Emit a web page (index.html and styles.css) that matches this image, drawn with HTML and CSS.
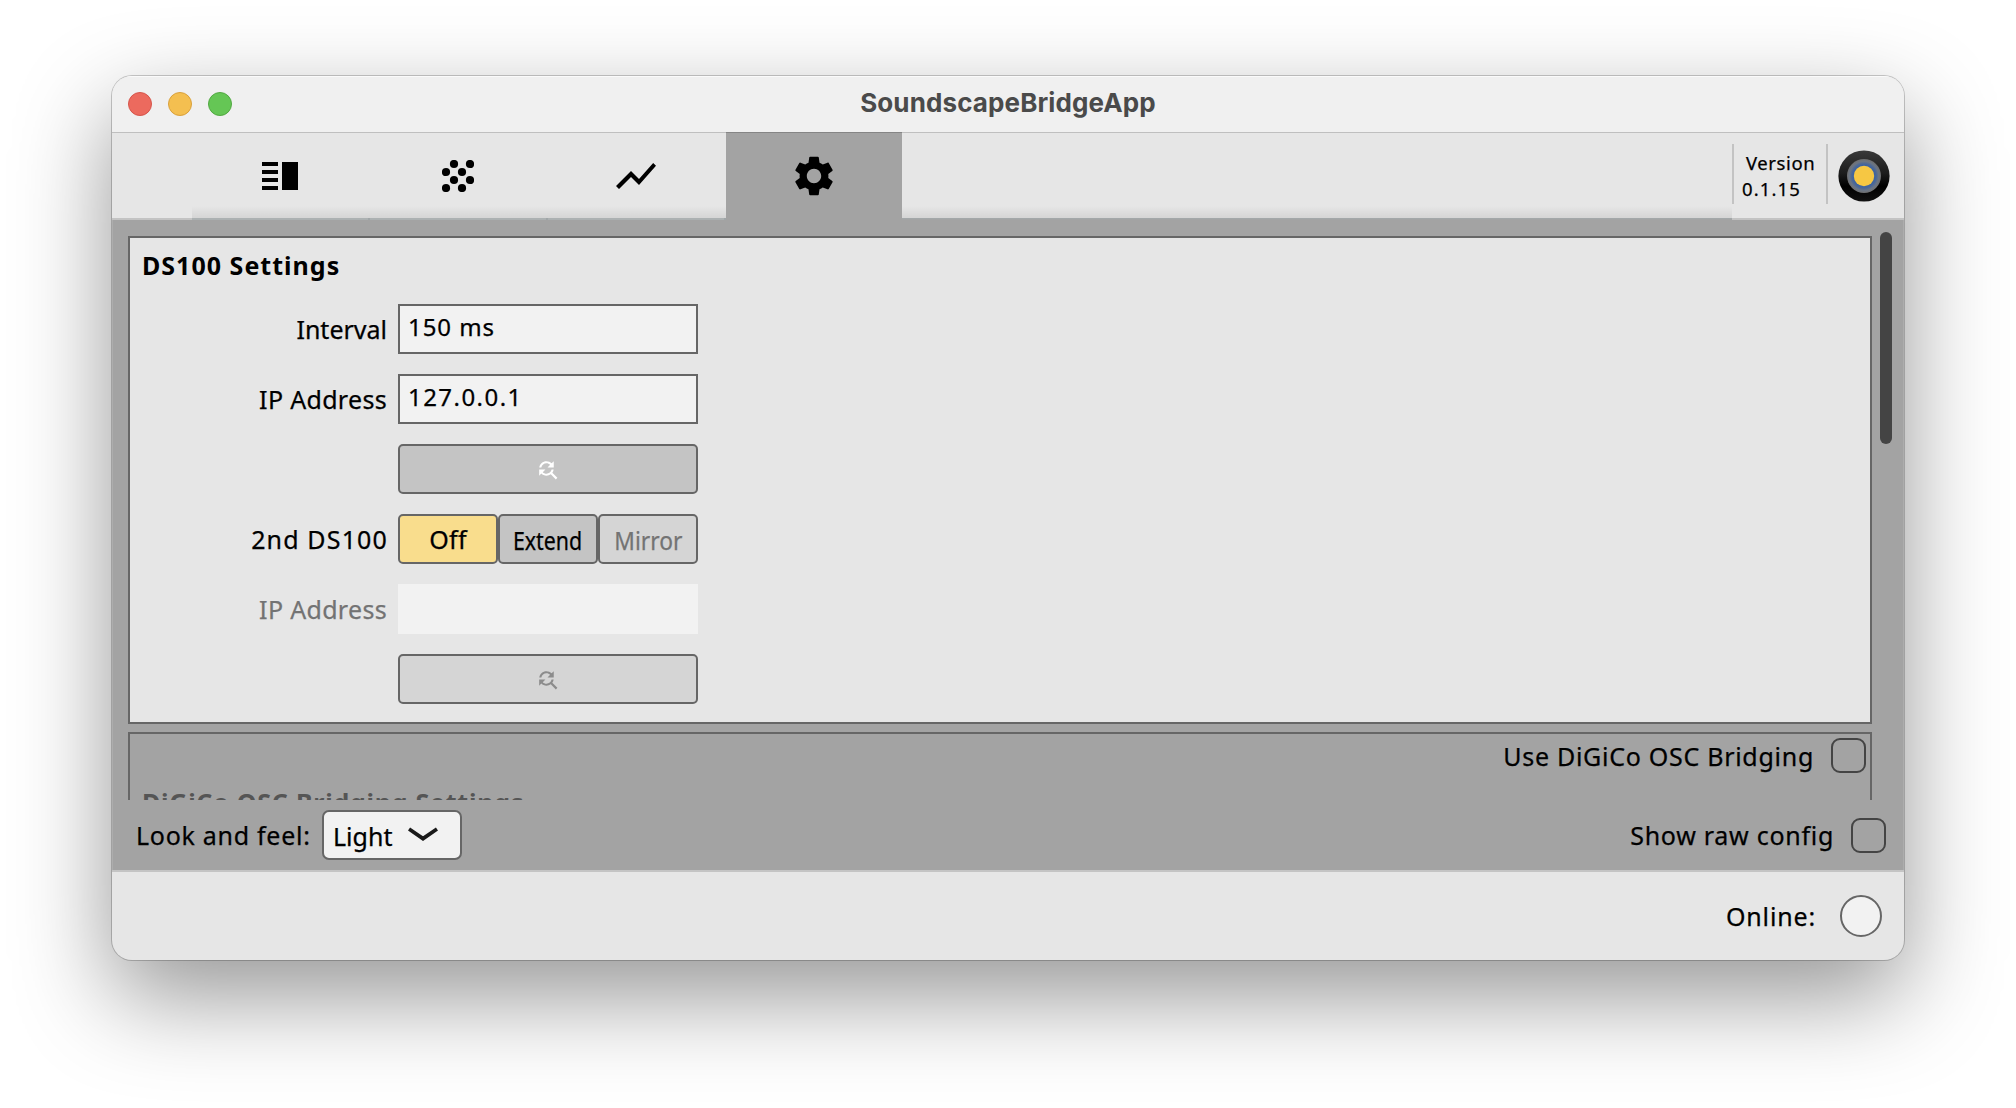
FILE: index.html
```html
<!DOCTYPE html>
<html lang="en">
<head>
<meta charset="utf-8">
<title>SoundscapeBridgeApp</title>
<link rel="stylesheet" href="styles.css">
</head>
<body>
<div class="window">
  <header class="titlebar">
    <div class="lights"><i class="light close"></i><i class="light minimise"></i><i class="light zoom"></i></div>
    <h1 class="title">SoundscapeBridgeApp</h1>
  </header>
  <nav class="toolbar">
    <div class="tabs">
      <div class="tab">
        <svg width="36" height="28" viewBox="0 0 36 28"><path d="M0 0h16v4H0zM0 8h16v4H0zM0 16h16v4H0zM0 24h16v4H0zM20 0h16v28H20z"/></svg>
      </div>
      <div class="tab">
        <svg width="32" height="32" viewBox="0 0 32 32"><circle cx="12" cy="4" r="4.1"/><circle cx="28" cy="4" r="4.1"/><circle cx="4" cy="12" r="4.1"/><circle cx="20" cy="12" r="4.1"/><circle cx="12" cy="20" r="4.1"/><circle cx="28" cy="20" r="4.1"/><circle cx="4" cy="28" r="4.1"/><circle cx="20" cy="28" r="4.1"/></svg>
      </div>
      <div class="tab">
        <svg width="48" height="48" viewBox="0 0 24 24"><path d="M3.5 18.49l6-6.01 4 4L22 6.92l-1.41-1.41-7.09 7.97-4-4L2 16.99z"/></svg>
      </div>
      <div class="tab selected">
        <svg width="48" height="48" viewBox="0 0 24 24"><path d="M19.14 12.94c.04-.3.06-.61.06-.94 0-.32-.02-.64-.07-.94l2.03-1.58c.18-.14.23-.41.12-.61l-1.92-3.32c-.12-.22-.37-.29-.59-.22l-2.39.96c-.5-.38-1.03-.7-1.62-.94l-.36-2.54c-.04-.24-.24-.41-.48-.41h-3.84c-.24 0-.43.17-.47.41l-.36 2.54c-.59.24-1.13.57-1.62.94l-2.39-.96c-.22-.08-.47 0-.59.22L2.74 8.87c-.12.21-.08.47.12.61l2.03 1.58c-.05.3-.09.63-.09.94s.02.64.07.94l-2.03 1.58c-.18.14-.23.41-.12.61l1.92 3.32c.12.22.37.29.59.22l2.39-.96c.5.38 1.03.7 1.62.94l.36 2.54c.05.24.24.41.48.41h3.84c.24 0 .44-.17.47-.41l.36-2.54c.59-.24 1.13-.56 1.62-.94l2.39.96c.22.08.47 0 .59-.22l1.92-3.32c.12-.22.07-.47-.12-.61l-2.01-1.58zM12 15.6c-1.98 0-3.6-1.62-3.6-3.6s1.62-3.6 3.6-3.6 3.6 1.62 3.6 3.6-1.62 3.6-3.6 3.6z"/></svg>
      </div>
    </div>
    <div class="about">
      <div class="version"><span class="version-name">Version</span><span class="version-number">0.1.15</span></div>
      <svg class="logo" width="52" height="52" viewBox="0 0 52 52">
        <defs>
          <linearGradient id="rim" x1="0" y1="0" x2="0" y2="1"><stop offset="0" stop-color="#3a3a3a"/><stop offset=".45" stop-color="#1c1c1c"/><stop offset=".7" stop-color="#000"/><stop offset="1" stop-color="#111"/></linearGradient>
          <radialGradient id="glow"><stop offset=".6" stop-color="#3a62a4"/><stop offset=".72" stop-color="#4a6797"/><stop offset=".86" stop-color="#6b7583"/><stop offset="1" stop-color="#6e6e6e"/></radialGradient>
        </defs>
        <circle cx="26" cy="26" r="25.6" fill="url(#rim)"/>
        <circle cx="26" cy="26" r="17" fill="url(#glow)"/>
        <circle cx="26" cy="26" r="10.2" fill="#f6c743"/>
      </svg>
    </div>
  </nav>
  <main class="content">
    <div class="viewport">
      <div class="sections">
        <section class="panel">
          <h2 class="heading">DS100 Settings</h2>
          <div class="form">
            <label class="label interval">Interval</label><div class="field">150 ms</div>
            <label class="label address">IP Address</label><div class="field ip">127.0.0.1</div>
            <span></span>
            <button class="button"><svg width="25" height="25" viewBox="0 0 24 24" fill="#fff"><path d="M11 6c1.38 0 2.63.56 3.54 1.46L12 10h6V4l-2.05 2.05C14.68 4.78 12.93 4 11 4c-3.53 0-6.43 2.61-6.92 6H6.1c.46-2.28 2.48-4 4.9-4zm5.64 9.14c.66-.9 1.12-1.97 1.28-3.14H15.9c-.46 2.28-2.48 4-4.9 4-1.38 0-2.63-.56-3.54-1.46L10 12H4v6l2.05-2.05C7.32 17.22 9.07 18 11 18c1.55 0 2.98-.51 4.14-1.36L20 21.49 21.49 20l-4.85-4.86z"/></svg></button>
            <label class="label second">2nd DS100</label>
            <div class="choices">
              <button class="button on"><span class="off">Off</span></button>
              <button class="button"><span class="extend">Extend</span></button>
              <button class="button disabled"><span class="mirror">Mirror</span></button>
            </div>
            <label class="label address muted">IP Address</label><div class="field empty"></div>
            <span></span>
            <button class="button disabled"><svg width="25" height="25" viewBox="0 0 24 24" fill="#8c8c8c"><path d="M11 6c1.38 0 2.63.56 3.54 1.46L12 10h6V4l-2.05 2.05C14.68 4.78 12.93 4 11 4c-3.53 0-6.43 2.61-6.92 6H6.1c.46-2.28 2.48-4 4.9-4zm5.64 9.14c.66-.9 1.12-1.97 1.28-3.14H15.9c-.46 2.28-2.48 4-4.9 4-1.38 0-2.63-.56-3.54-1.46L10 12H4v6l2.05-2.05C7.32 17.22 9.07 18 11 18c1.55 0 2.98-.51 4.14-1.36L20 21.49 21.49 20l-4.85-4.86z"/></svg></button>
          </div>
        </section>
        <section class="panel inactive">
          <label class="toggle"><span class="toggle-text">Use DiGiCo OSC Bridging</span><i class="checkbox"></i></label>
          <h2 class="heading">DiGiCo OSC Bridging Settings</h2>
        </section>
      </div>
      <div class="scrollbar"></div>
    </div>
    <div class="options">
      <span class="look">Look and feel:</span>
      <div class="select"><span class="select-text">Light</span><svg width="30" height="16" viewBox="0 0 30 16" fill="none" stroke="#1a1a1a" stroke-width="3.8"><path d="M1 2l14 9.6L29 2"/></svg></div>
      <label class="toggle raw"><span class="toggle-text">Show raw config</span><i class="checkbox"></i></label>
    </div>
  </main>
  <footer class="status"><span class="online">Online:</span><i class="lamp"></i></footer>
</div>
</body>
</html>
```
FILE: styles.css
```css
* { box-sizing: border-box; }
body {
  margin: 0;
  height: 1108px;
  padding: 76px 112px;
  overflow: hidden;
  background: #fff;
  color: #000;
  font: 25px/34px "Noto Sans", "Open Sans", sans-serif;
  -webkit-text-stroke: .25px;
}
svg { display: block; flex: none; }
.window {
  display: flex;
  flex-direction: column;
  width: 1792px;
  height: 884px;
  overflow: hidden;
  border-radius: 20px;
  background: #e6e6e6;
  box-shadow: 0 0 0 1px rgba(0,0,0,.2), 0 36px 96px rgba(0,0,0,.42);
}
.titlebar {
  display: grid;
  grid-template-columns: 1fr auto 1fr;
  align-items: center;
  height: 56px;
  flex: none;
  padding: 0 16px;
  background: #f0f0f0;
  box-shadow: inset 0 1px #fafafa;
}
.lights { display: flex; gap: 16px; }
.light { width: 24px; height: 24px; border-radius: 50%; border: 1px solid; }
.close { background: #ec6a5e; border-color: #d5554b; }
.minimise { background: #f4bf50; border-color: #d9a03c; }
.zoom { background: #65c655; border-color: #52a842; }
.title {
  margin: 0 0 2px;
  color: #4a4a4a;
  font: 700 26px/34px Inter, sans-serif;
  letter-spacing: .12px;
  -webkit-text-stroke: 0;
}
.toolbar {
  display: flex;
  height: 88px;
  flex: none;
  border-top: 1px solid #bfbfbf;
}
.tabs {
  display: flex;
  flex: 1;
  margin-left: 80px;
  background: linear-gradient(#a3a9ab, #a3a3a3) bottom / 100% 2px no-repeat,
    linear-gradient(rgba(0,0,0,0), rgba(0,0,0,.075)) 0 73px / 100% 12px no-repeat;
}
.toolbar { background: linear-gradient(#c3c3c3, #c3c3c3) bottom / 100% 2px no-repeat #e6e6e6; }
.tab {
  display: flex;
  align-items: center;
  justify-content: center;
  width: 178px;
  padding: 0 2px 1px 0;
  background: linear-gradient(90deg, #acb1b2 176px, #a0a6a8 176px) bottom / 100% 2px no-repeat;
}
.tab.selected { width: 176px; margin-top: -1px; padding-right: 0; border-top: 1px solid #858585; background: #a3a3a3; }
.about {
  display: flex;
  align-items: flex-start;
  width: 172px;
  padding-top: 11px;
}
.version {
  display: flex;
  flex-direction: column;
  width: 96px;
  height: 60px;
  padding: 6px 0 0 7px;
  border: solid #c3c3c3;
  border-width: 0 2px;
  font-size: 18.5px;
  line-height: 26px;
}
.version-name { margin-left: 5px; letter-spacing: .6px; }
.version-number { margin-left: 1px; letter-spacing: 1.1px; }
.logo { margin: 6px 0 0 10px; }
.content { height: 650px; flex: none; background: #a3a3a3; border: solid #adadad; border-width: 0 1px; }
.viewport { display: flex; height: 580px; overflow: hidden; }
.sections {
  display: flex;
  flex-direction: column;
  gap: 8px;
  width: 1759px;
  padding: 16px 0 0 15px;
}
.panel {
  width: 1744px;
  height: 488px;
  flex: none;
  padding: 10px 14px 10px 12px;
  border: 2px solid #666;
  background: #e6e6e6;
}
.heading { margin: 0; font-size: 25px; line-height: 34px; font-weight: 700; letter-spacing: 1.02px; -webkit-text-stroke: 0; }
.form {
  display: grid;
  grid-template-columns: 246px 300px;
  grid-auto-rows: 50px;
  row-gap: 20px;
  column-gap: 10px;
  margin-top: 22px;
}
.label { align-self: center; text-align: right; }
.interval { letter-spacing: 0; padding-right: 1px; }
.address { letter-spacing: .32px; padding-right: 1px; }
.second { letter-spacing: 1.15px; }
.muted { color: #737373; }
.field {
  padding: 3px 8px 0;
  border: 2px solid #666;
  background: #f2f2f2;
  font-size: 24px;
  line-height: 36px;
  letter-spacing: .95px;
}
.ip { letter-spacing: 1.45px; }
.empty { border-color: #f2f2f2; }
.button {
  display: flex;
  align-items: center;
  justify-content: center;
  width: 100%;
  height: 50px;
  padding: 0;
  border: 2px solid #666;
  border-radius: 5px;
  background: #c4c4c4;
  color: #000;
  font: inherit;
}
.button svg { margin-right: 1px; }
.disabled { background: #d5d5d5; color: #737373; }
.on { background: #f9dd8d; }
.choices { display: flex; }
.off { letter-spacing: .3px; }
.extend { transform: scaleX(.855); padding-top: 2px; }
.mirror { transform: scaleX(.91); padding-top: 2px; }
.inactive { display: flex; flex-direction: column; background: none; padding: 4px 4px 0 12px; }
.inactive .heading { margin-top: 12px; color: #555; letter-spacing: .75px; }
.toggle { display: flex; align-items: center; gap: 17px; align-self: flex-end; letter-spacing: .72px; }
.toggle-text { padding-bottom: 1px; }
.inactive .toggle-text { padding: 1px 0 0; }
.checkbox { width: 35px; height: 35px; border: 2px solid #444; border-radius: 9px; }
.scrollbar { width: 12px; height: 212px; margin: 12px 0 0 8px; border-radius: 6px; background: #444; }
.options { display: flex; align-items: center; height: 70px; padding: 0 17px 0 23px; }
.look { width: 175px; white-space: nowrap; letter-spacing: .72px; }
.select {
  display: flex;
  align-items: center;
  width: 140px;
  height: 50px;
  margin-left: 11px;
  padding-left: 9px;
  border: 2px solid #666;
  border-radius: 7px;
  background: #f2f2f2;
}
.select-text { width: 75px; letter-spacing: 0; padding-top: 2px; }
.raw { margin-left: auto; align-self: center; }
.status {
  display: flex;
  align-items: center;
  justify-content: flex-end;
  flex: 1;
  gap: 24px;
  padding-right: 22px;
  border-top: 2px solid #c4c4c4;
}
.online { letter-spacing: .85px; }
.lamp { width: 42px; height: 42px; border: 2px solid #666; border-radius: 50%; background: #f2f2f2; }
```
